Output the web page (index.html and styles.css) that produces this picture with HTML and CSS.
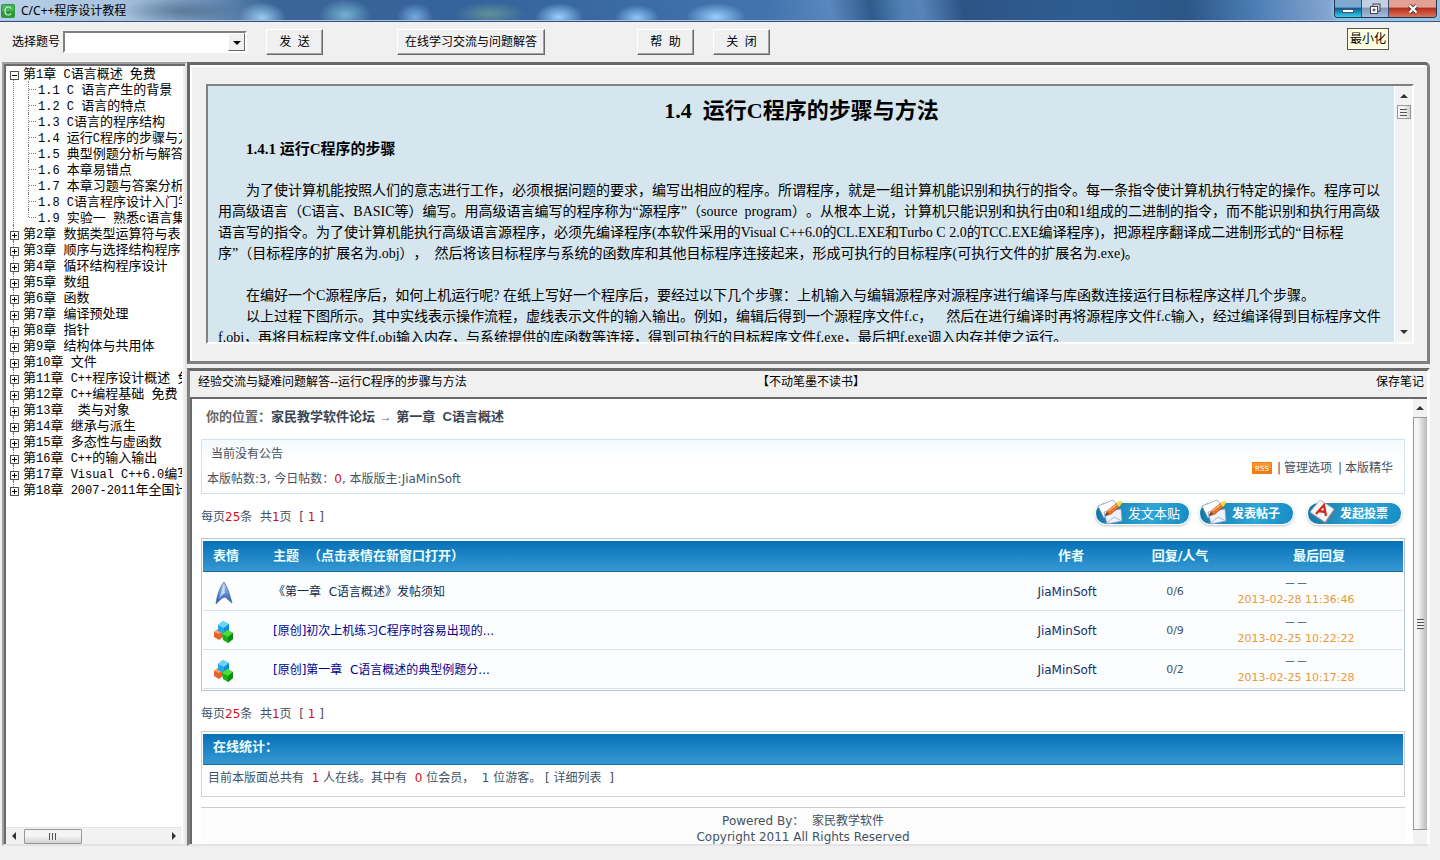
FILE: index.html
```html
<!DOCTYPE html>
<html lang="zh-CN">
<head>
<meta charset="utf-8">
<title>C/C++程序设计教程</title>
<link rel="stylesheet" href="styles.css">
</head>
<body>
<svg width="0" height="0" class="defs" aria-hidden="true">
  <defs>
    <linearGradient id="ship" x1="0" y1="0" x2="0" y2="1"><stop offset="0" stop-color="#c9daee"/><stop offset=".4" stop-color="#6f9fe0"/><stop offset="1" stop-color="#1a4fb0"/></linearGradient>
    <symbol id="cubes" viewBox="0 0 22 24">
      <path d="M1 12l4-3 5 2v6l-4 3-5-3z" fill="#e8602a"/><path d="M1 12l4-3 5 2-4 3z" fill="#ff9a62"/>
      <path d="M5 5l5-4 6 3v6l-5 4-6-3z" fill="#1fa9e8"/><path d="M5 5l5-4 6 3-5 4z" fill="#6fd4fb"/><path d="M11 8l5-4v6l-5 4z" fill="#158cd0"/>
      <path d="M9 14l5-4 6 3v6l-5 4-5-3z" fill="#12b312"/><path d="M9 14l5-4 6 3-5 4z" fill="#4fdc38"/><path d="M15 17l5-4v6l-5 4z" fill="#0b8a12"/>
    </symbol>
    <symbol id="notepad" viewBox="0 0 30 26">
      <path d="M2 7l15-6 3 4-12 14z" fill="#fff" stroke="#8da2b5" stroke-width=".8"/>
      <path d="M8 13l17-3 1 12-15 3z" fill="#eef3fb" stroke="#8d9dbd" stroke-width=".8"/>
      <path d="M11 24l7-6 8 4" fill="none" stroke="#aab7da"/>
      <path d="M9 17l3-6 8-6 3 3-8 7z" fill="#f0702a" stroke="#a94a1c" stroke-width=".7"/>
      <path d="M9 17l2-4 2 2z" fill="#543"/><path d="M20 5l3-3 4 1-4 5z" fill="#ffd72e"/>
      <path d="M12 12l8-6" stroke="#ffc08a" stroke-width="1.2"/>
    </symbol>
    <symbol id="vote" viewBox="0 0 30 26">
      <path d="M3 15L13 2l14 9-9 14z" fill="#6f7f8c"/>
      <path d="M2 13L12 1l14 9-9 13z" fill="#f3f5f7" stroke="#a5b0b8" stroke-width=".7"/>
      <path d="M8 15l8-9 2 11M11 12l6 1" fill="none" stroke="#cf2c20" stroke-width="2.3"/>
    </symbol>
  </defs>
</svg>

<header class="titlebar">
  <svg class="app-icon" viewBox="0 0 14 14" aria-hidden="true"><rect width="14" height="14" rx="2" fill="#2a9a3c"/><rect x="1" y="1" width="12" height="6" rx="1" fill="#48b558"/><path d="M10 4.6C9.500 3.500 8.500 3 7.300 3 5 3 4 4.900 4 7s1.100 4 3.300 4c1.300 0 2.200-.6 2.700-1.600" fill="none" stroke="#d8f5da" stroke-width="1.200"/></svg>
  <h1 class="title">C/C++程序设计教程</h1>
  <div class="win-controls">
    <button class="win-btn min" aria-label="最小化"><svg viewBox="0 0 14 12"><rect x="1.500" y="6.500" width="11" height="3" fill="#fff" stroke="#456"/></svg></button>
    <button class="win-btn max" aria-label="还原"><svg viewBox="0 0 14 12"><rect x="5" y="1" width="7" height="7" fill="#ccd" stroke="#445"/><rect x="2.500" y="3.500" width="7" height="7" fill="#fff" stroke="#445"/><rect x="5" y="6" width="2" height="2" fill="#667" stroke="#445" stroke-width=".5"/></svg></button>
    <button class="win-btn close" aria-label="关闭窗口"><svg viewBox="0 0 14 12"><path d="M3.500 2.500l7 7m0-7l-7 7" stroke="#5b2a2a" stroke-width="4"/><path d="M3.500 2.500l7 7m0-7l-7 7" stroke="#fff" stroke-width="2.400"/></svg></button>
  </div>
</header>

<div class="toolbar">
  <label for="question">选择题号</label>
  <div class="combo"><select id="question"><option></option></select><span class="combo-arrow"></span></div>
  <button class="btn send">发&nbsp; 送</button>
  <button class="btn wide">在线学习交流与问题解答</button>
  <button class="btn help">帮&nbsp; 助</button>
  <button class="btn">关&nbsp; 闭</button>
  <div class="tooltip" role="tooltip">最小化</div>
</div>

<main class="workspace">
  <nav class="sidebar">
    <ul class="tree">
      <li class="open">第<i>1</i>章<i> C</i>语言概述<i> </i>免费
        <ul>
          <li><i>1.1 C </i>语言产生的背景</li>
          <li><i>1.2 C </i>语言的特点</li>
          <li><i>1.3 C</i>语言的程序结构</li>
          <li><i>1.4 </i>运行<i>C</i>程序的步骤与方法</li>
          <li><i>1.5 </i>典型例题分析与解答</li>
          <li><i>1.6 </i>本章易错点</li>
          <li><i>1.7 </i>本章习题与答案分析</li>
          <li><i>1.8 C</i>语言程序设计入门学习</li>
          <li><i>1.9 </i>实验一<i> </i>熟悉<i>c</i>语言集</li>
        </ul>
      </li>
      <li>第<i>2</i>章<i> </i>数据类型运算符与表</li>
      <li>第<i>3</i>章<i> </i>顺序与选择结构程序</li>
      <li>第<i>4</i>章<i> </i>循环结构程序设计</li>
      <li>第<i>5</i>章<i> </i>数组</li>
      <li>第<i>6</i>章<i> </i>函数</li>
      <li>第<i>7</i>章<i> </i>编译预处理</li>
      <li>第<i>8</i>章<i> </i>指针</li>
      <li>第<i>9</i>章<i> </i>结构体与共用体</li>
      <li>第<i>10</i>章<i> </i>文件</li>
      <li>第<i>11</i>章<i> C++</i>程序设计概述<i> </i>免费</li>
      <li>第<i>12</i>章<i> C++</i>编程基础<i> </i>免费</li>
      <li>第<i>13</i>章<i>  </i>类与对象</li>
      <li>第<i>14</i>章<i> </i>继承与派生</li>
      <li>第<i>15</i>章<i> </i>多态性与虚函数</li>
      <li>第<i>16</i>章<i> C++</i>的输入输出</li>
      <li>第<i>17</i>章<i> Visual C++6.0</i>编写</li>
      <li>第<i>18</i>章<i> 2007-2011</i>年全国计</li>
    </ul>
    <div class="hbar" aria-hidden="true"><span class="arrow left"></span><span class="thumb"></span><span class="arrow right"></span></div>
  </nav>

  <div class="panes">
    <section class="lesson-pane">
      <div class="lesson">
        <article class="article">
          <h2>1.4&nbsp; 运行C程序的步骤与方法</h2>
          <h3>1.4.1 运行C程序的步骤</h3>
          <p>为了使计算机能按照人们的意志进行工作，必须根据问题的要求，编写出相应的程序。所谓程序，就是一组计算机能识别和执行的指令。每一条指令使计算机执行特定的操作。程序可以<br>用高级语言（C语言、BASIC等）编写。用高级语言编写的程序称为“源程序”（source&nbsp; program）。从根本上说，计算机只能识别和执行由0和1组成的二进制的指令，而不能识别和执行用高级<br>语言写的指令。为了使计算机能执行高级语言源程序，必须先编译程序(本软件采用的Visual C++6.0的CL.EXE和Turbo C 2.0的TCC.EXE编译程序)，把源程序翻译成二进制形式的“目标程<br>序”（目标程序的扩展名为.obj），&nbsp; 然后将该目标程序与系统的函数库和其他目标程序连接起来，形成可执行的目标程序(可执行文件的扩展名为.exe)。</p>
          <p class="gap">在编好一个C源程序后，如何上机运行呢? 在纸上写好一个程序后，要经过以下几个步骤：上机输入与编辑源程序对源程序进行编译与库函数连接运行目标程序这样几个步骤。</p>
          <p>以上过程下图所示。其中实线表示操作流程，虚线表示文件的输入输出。例如，编辑后得到一个源程序文件f.c，&nbsp;&nbsp;&nbsp; 然后在进行编译时再将源程序文件f.c输入，经过编译得到目标程序文件<br>f.obj，再将目标程序文件f.obj输入内存，与系统提供的库函数等连接，得到可执行的目标程序文件f.exe，最后把f.exe调入内存并使之运行。</p>
        </article>
        <div class="vbar" aria-hidden="true"><span class="arrow up"></span><span class="thumb"></span><span class="arrow down"></span></div>
      </div>
    </section>

    <section class="forum-pane">
      <div class="forum-head"><span>经验交流与疑难问题解答--运行C程序的步骤与方法</span><span class="motto">【不动笔墨不读书】</span><a href="#">保存笔记</a></div>
      <div class="forum-body">
        <div class="forum">
          <div class="crumb">你的位置：<a href="#">家民教学软件论坛</a> <span class="to">→</span> <a href="#">第一章&nbsp; C语言概述</a></div>
          <div class="notice">
            <div class="notice-text"><p class="announce">当前没有公告</p><p>本版帖数:3, 今日帖数：<b>0</b>, 本版版主:JiaMinSoft</p></div>
            <div class="notice-links"><svg class="rss" viewBox="0 0 20 12" aria-label="RSS"><rect width="20" height="12" fill="#ef7d10"/><rect x="1" y="1" width="18" height="5" fill="#f79a35"/><text x="10" y="9" text-anchor="middle">RSS</text></svg><span class="bar">|</span><a href="#">管理选项</a><span class="bar">|</span><a href="#">本版精华</a></div>
          </div>
          <div class="actions">
            <p class="pager">每页<b>25</b>条&nbsp; 共<b>1</b>页&nbsp; [ <b>1</b> ]</p>
            <div class="pills">
              <button class="pill plain"><svg><use href="#notepad"/></svg>发文本贴</button>
              <button class="pill"><svg><use href="#notepad"/></svg>发表帖子</button>
              <button class="pill poll"><svg><use href="#vote"/></svg>发起投票</button>
            </div>
          </div>
          <div class="topic-box">
            <table class="topics">
              <thead><tr><th class="c-icon">表情</th><th class="c-subject">主题&nbsp; （点击表情在新窗口打开）</th><th class="c-author">作者</th><th class="c-count">回复/人气</th><th class="c-last">最后回复</th></tr></thead>
              <tbody>
                <tr><td class="c-icon"><svg viewBox="0 0 22 24"><path d="M11 1c4 6 6 14 8 21-3-2-5-5-7-6-4 1-6 4-9 7C4 14 7 6 11 1z" fill="url(#ship)" stroke="#5f779f" stroke-width=".9"/><path d="M11 3c-2 5-3 10-5 15 3-4 4-5 6-6z" fill="#e6effa" opacity=".75"/></svg></td><td class="c-subject"><a href="#" class="read">《第一章&nbsp; C语言概述》发帖须知</a></td><td class="c-author"><a href="#">JiaMinSoft</a></td><td class="c-count">0/6</td><td class="c-last"><div>－－<time>2013-02-28 11:36:46</time></div></td></tr>
                <tr><td class="c-icon"><svg><use href="#cubes"/></svg></td><td class="c-subject"><a href="#">[原创]初次上机练习C程序时容易出现的...</a></td><td class="c-author"><a href="#">JiaMinSoft</a></td><td class="c-count">0/9</td><td class="c-last"><div>－－<time>2013-02-25 10:22:22</time></div></td></tr>
                <tr><td class="c-icon"><svg><use href="#cubes"/></svg></td><td class="c-subject"><a href="#">[原创]第一章&nbsp; C语言概述的典型例题分...</a></td><td class="c-author"><a href="#">JiaMinSoft</a></td><td class="c-count">0/2</td><td class="c-last"><div>－－<time>2013-02-25 10:17:28</time></div></td></tr>
              </tbody>
            </table>
          </div>
          <p class="pager lower">每页<b>25</b>条&nbsp; 共<b>1</b>页&nbsp; [ <b>1</b> ]</p>
          <div class="online">
            <h4>在线统计：</h4>
            <p>目前本版面总共有&nbsp; <b>1</b> 人在线。其中有&nbsp; <b>0</b> 位会员，&nbsp; 1 位游客。&nbsp;[ <a href="#">详细列表</a>&nbsp; ]</p>
          </div>
          <footer class="copy">Powered By：&nbsp; <a href="#">家民教学软件</a><br>Copyright 2011 All Rights Reserved</footer>
        </div>
        <div class="vbar tall" aria-hidden="true"><span class="arrow up"></span><span class="thumb"></span></div>
      </div>
    </section>
  </div>
</main>
</body>
</html>
```
FILE: styles.css
```css
* { box-sizing: border-box; }
html, body { height: 100%; }
body {
  margin: 0;
  display: flex;
  flex-direction: column;
  overflow: hidden;
  background: #f0f0f0;
  color: #000;
  font: 12px/16px "Liberation Sans", "Noto Sans CJK SC", sans-serif;
  text-spacing-trim: space-all;
}
p, h1, h2, h3, h4, ul { margin: 0; padding: 0; }
ul { list-style: none; }
a { color: inherit; text-decoration: none; }
button { font: inherit; color: inherit; padding: 0; }
.defs { position: absolute; }

/* Title bar */
.titlebar {
  flex: none;
  display: flex;
  align-items: center;
  height: 22px;
  padding-left: 1px;
  border-bottom: 1px solid #35507a;
  box-shadow: inset 0 -1px #a9c4e2;
  background:
    radial-gradient(ellipse 60px 12px at 180px 11px, rgba(60, 85, 115, .5), transparent),
    radial-gradient(ellipse 24px 16px at 262px 18px, #98ccf2, transparent),
    radial-gradient(ellipse 26px 16px at 345px 15px, rgba(131, 196, 222, .8), transparent),
    radial-gradient(ellipse 18px 14px at 415px 17px, rgba(132, 189, 240, .8), transparent),
    radial-gradient(ellipse 36px 12px at 490px 14px, rgba(107, 156, 152, .8), transparent),
    radial-gradient(ellipse 24px 14px at 559px 17px, #98d0fa, transparent),
    radial-gradient(ellipse 22px 13px at 637px 18px, #8dc8f8, transparent),
    radial-gradient(ellipse 30px 14px at 716px 17px, #96d0fb, transparent),
    linear-gradient(80deg, #b9d0e8 0, #a8c3de 120px, #6f93b8 200px, #3b6598 270px, #35629b 470px, #4274ad 760px, #5a87bd 820px, #2f5b8b 860px, #5080b3 890px, #5783b8 910px, #2c5585 950px, #2f5d92 1080px, #2b5686 1170px, #4d7fb5 1240px, #94afd6 1330px, #9db9da 100%);
}
.app-icon { width: 14px; height: 14px; }
.title { margin-left: 6px; font: 400 12px/20px "Noto Sans", "Noto Sans CJK SC", sans-serif; }
.win-controls {
  display: flex;
  align-self: flex-start;
  height: 18px;
  margin: 0 3px 0 auto;
  border: 1px solid #26334f;
  border-top: 0;
  border-radius: 0 0 4px 4px;
  overflow: hidden;
  box-shadow: 0 0 5px #7fe3ff;
}
.win-btn { width: 27px; border: 0; border-right: 1px solid #3b4d6c; display: flex; align-items: center; justify-content: center; }
.win-btn svg { width: 14px; height: 12px; }
.min { background: linear-gradient(#7fa9cf 40%, #0e5f9a 50%, #32d2ee); }
.max { background: linear-gradient(#c3cfe2 40%, #7f97b9 50%, #a9bddb); }
.close { width: 47px; border-right: 0; background: linear-gradient(#e2a194 40%, #b5301c 50%, #d8755a); }

/* Toolbar */
.toolbar { position: relative; flex: none; display: flex; align-items: center; height: 40px; padding-left: 12px; }
.combo { position: relative; width: 184px; height: 22px; margin: 0 19px 0 3px; border: 2px solid; border-color: #808080 #fff #fff #808080; background: #fff; }
.combo select { width: 100%; height: 100%; border: 0; background: none; appearance: none; }
.combo-arrow { position: absolute; top: 0; right: 0; width: 17px; height: 18px; border: 1px solid; border-color: #fff #696969 #696969 #fff; background: #f0f0f0; pointer-events: none; }
.combo-arrow::after { content: ""; position: absolute; left: 4px; top: 7px; border: 4px solid transparent; border-top-color: #000; border-bottom: 0; }
.btn { width: 57px; height: 26px; border: 1px solid; border-color: #fff #696969 #696969 #fff; box-shadow: inset -1px -1px #a0a0a0; background: #f0f0f0; }
.send { margin-right: 74px; }
.wide { width: 148px; margin-right: 92px; }
.help { margin-right: 19px; }
.tooltip { position: absolute; top: 6px; right: 51px; padding: 2px; border: 1px solid #555; background: #ffffe1; }

/* Workspace frame */
.workspace { flex: 1; min-height: 0; display: grid; grid-template-columns: 185px minmax(0, 1fr); padding: 0 10px 14px 2px; }
.sidebar { display: flex; flex-direction: column; min-height: 0; border: 2px solid; border-color: #a0a0a0 #e3e3e3 #e3e3e3 #a0a0a0; box-shadow: inset 2px 2px #696969, inset -2px 0 #f0f0f0; padding: 1px 3px 0 2px; background: #fff; }
.tree { flex: 1; overflow: hidden; font-family: "Noto Sans CJK SC", sans-serif; font-size: 13px; white-space: nowrap; }
.tree i { font: 12px/1px "Liberation Mono", monospace; white-space: pre; }
.tree > li, .tree ul > li { position: relative; line-height: 16px; }
.tree > li { padding-left: 17px; }
.tree > li::before { content: ""; position: absolute; left: 7px; top: 0; height: 100%; border-left: 1px dotted #808080; }
.tree > li:first-child::before { top: 8px; }
.tree > li:last-child::before { height: 8px; }
.tree > li::after {
  content: ""; position: absolute; left: 4px; top: 6px; width: 7px; height: 7px; border: 1px solid #505050;
  background: linear-gradient(#000, #000) center / 5px 1px no-repeat, linear-gradient(#000, #000) center / 1px 5px no-repeat, #fff;
}
.tree > li.open::after { background: linear-gradient(#000, #000) center / 5px 1px no-repeat, #fff; }
.tree ul > li { padding-left: 15px; }
.tree ul > li::before { content: ""; position: absolute; left: 5px; top: 0; height: 100%; border-left: 1px dotted #808080; }
.tree ul > li:last-child::before { height: 8px; }
.tree ul > li::after { content: ""; position: absolute; left: 6px; top: 8px; width: 7px; border-top: 1px dotted #808080; }

/* Drawn scrollbars */
.hbar { display: flex; align-items: center; height: 17px; padding: 0 6px; background: #f2f2f2; border-top: 1px solid #e4e4e4; }
.hbar .thumb { width: 58px; height: 15px; margin-left: 8px; border: 1px solid #979797; border-radius: 1px; background: repeating-linear-gradient(90deg, #555 0 1px, #eee 1px 3px) center / 8px 7px no-repeat, linear-gradient(#f5f5f5 45%, #d2d2d4); }
.arrow { width: 0; height: 0; border: 4px solid transparent; }
.left { border-right-color: #333; border-left: 0; }
.right { border-left-color: #333; border-right: 0; margin-left: auto; }
.up { border-bottom-color: #333; border-top: 0; }
.down { border-top-color: #333; border-bottom: 0; margin-top: auto; }
.vbar { flex: none; display: flex; flex-direction: column; align-items: center; width: 18px; padding: 8px 0; background: #f2f2f2; border-left: 1px solid #fff; }
.vbar .thumb { width: 14px; height: 14px; margin-top: 7px; border: 1px solid #979797; background: repeating-linear-gradient(#555 0 1px, #eee 1px 3px) center / 7px 7px no-repeat, linear-gradient(90deg, #f5f5f5 45%, #d2d2d4); }
.tall { width: 14px; padding: 7px 0 14px; border-left: 0; }
.tall .thumb { flex: 1; border-right: 0; background: repeating-linear-gradient(#555 0 1px, #eee 1px 3px) center / 7px 10px no-repeat, linear-gradient(90deg, #f5f5f5 30%, #b9b9bc); }

/* Lesson pane */
.panes { display: grid; grid-template-rows: 302px minmax(0, 1fr); gap: 4px; min-height: 0; }
.lesson-pane { padding: 19px 13px 16px 16px; border: 3px solid; border-color: #696969 #808080 #808080 #696969; border-top-right-radius: 5px; box-shadow: inset 2px 2px #fff; }
.lesson { display: flex; height: 260px; border: 2px solid; border-color: #808080 #fff #fff #808080; }
.article { flex: 1; min-width: 0; overflow: hidden; padding: 10px 9px 0 10px; background: #d5e6ee; font: 14px/21px "Liberation Serif", "Noto Sans CJK SC", serif; white-space: nowrap; }
.article h2 { font-size: 22px; line-height: 30px; text-align: center; }
.article h3 { margin: 13px 0 20px; padding-left: 28px; font-size: 15px; line-height: 21px; }
.article p { text-indent: 28px; }
.article .gap { margin-top: 21px; }

/* Forum pane */
.forum-pane { display: flex; flex-direction: column; min-height: 0; border: 3px solid; border-color: #696969 #fff #e3e3e3 #808080; border-bottom-width: 2px; }
.forum-head { flex: none; display: grid; grid-template-columns: 1fr auto 1fr; align-items: center; height: 26px; padding: 0 3px 4px 8px; }
.forum-head a { text-align: right; }
.forum-body { flex: 1; display: flex; min-height: 0; border: solid #696969; border-width: 2px 0 0 2px; background: #fff; }
.forum { flex: 1; min-width: 0; overflow: hidden; padding: 0 8px 0 9px; color: #445162; font-family: "DejaVu Sans", "Noto Sans CJK SC", sans-serif; }
.forum b { color: #d01018; font-weight: 400; }
.crumb { padding: 8px 5px 0; height: 40px; line-height: 20px; font-size: 13px; font-weight: 700; font-family: "Liberation Sans", "Noto Sans CJK SC", sans-serif; color: #666; }
.crumb a { color: #3b4654; }
.crumb .to { padding: 0 1px; font-weight: 400; font-size: 12px; }
.notice { display: flex; justify-content: space-between; align-items: center; height: 55px; padding: 0 11px 0 5px; border: 1px solid #d3e1e8; background: linear-gradient(#f3f9fe, #fff 40%); }
.notice p { line-height: 25px; }
.announce { padding-left: 4px; }
.notice-links { display: flex; align-items: center; padding-top: 2px; }
.rss { width: 20px; height: 12px; margin-right: 3px; }
.rss text { font: 7px "DejaVu Sans", sans-serif; fill: #fff; }
.notice-links .bar { margin: 0 3px 0 2px; }
.bar + a + .bar { margin-left: 6px; }
.actions { display: flex; justify-content: space-between; align-items: center; height: 44px; }
.pager { padding-top: 2px; }
.pills { display: flex; gap: 11px; padding: 0 4px 6px 0; }
.pill { position: relative; width: 93px; height: 21px; border: 0; border-radius: 11px; padding-left: 32px; text-align: left; color: #fff; font-weight: 700; background: linear-gradient(100deg, #1477a8, #2fa5d6 60%, #168cc4); box-shadow: 0 0 0 1px #fff, 0 1px 3px 1px #b8c4ca; font-family: "Noto Sans CJK SC", sans-serif; }
.pill.plain { font-weight: 400; font-size: 13px; }
.pill.poll { margin-left: 4px; }
.pill svg { position: absolute; left: 0; top: -4px; width: 30px; height: 26px; }
.topic-box { border: 1px solid #b5c6d1; padding: 2px 1px 1px; }
.topics { width: 100%; border-collapse: collapse; table-layout: fixed; }
.topics th, .online h4 { height: 31px; padding: 0; color: #eaffff; font-size: 13px; font-weight: 700; font-family: "DejaVu Sans", "Noto Sans CJK SC", sans-serif; background: linear-gradient(#0671b8, #3698d2); border-bottom: 1px solid #186f9f; }
.topics th { height: 30px; }
.topics td { height: 39px; padding: 2px 0 0; border-bottom: 1px solid #d6e2e7; background: #fcfdfe; }
.topics .c-icon { width: 62px; padding-left: 10px; text-align: left; }
.topics .c-subject { padding-left: 8px; text-align: left; }
.topics .c-author { width: 108px; text-align: center; }
.topics .c-count { width: 110px; text-align: center; }
.topics .c-last { width: 168px; text-align: center; }
.topics td.c-author { padding-right: 8px; color: #14306a; }
.topics td.c-count { padding-right: 10px; font-size: 11px; }
.topics td.c-last { padding-right: 46px; }
.c-last time { display: block; font-size: 11px; color: #e79a3a; }
.c-icon svg { display: block; width: 22px; height: 24px; margin-top: 2px; }
td.c-subject a { color: #00008b; }
td.c-subject .read { color: #0c2c4c; }
.lower { height: 40px; padding-top: 5px; line-height: 36px; }
.online { height: 66px; border: 1px solid #ccd2d6; padding: 2px 1px; }
.online h4 { padding-left: 10px; line-height: 26px; }
.online p { padding: 5px 5px 0; }
.copy { margin-top: 10px; padding-top: 5px; border-top: 1px solid #ccc; background: #fcfcfc; height: 80px; text-align: center; }
```
